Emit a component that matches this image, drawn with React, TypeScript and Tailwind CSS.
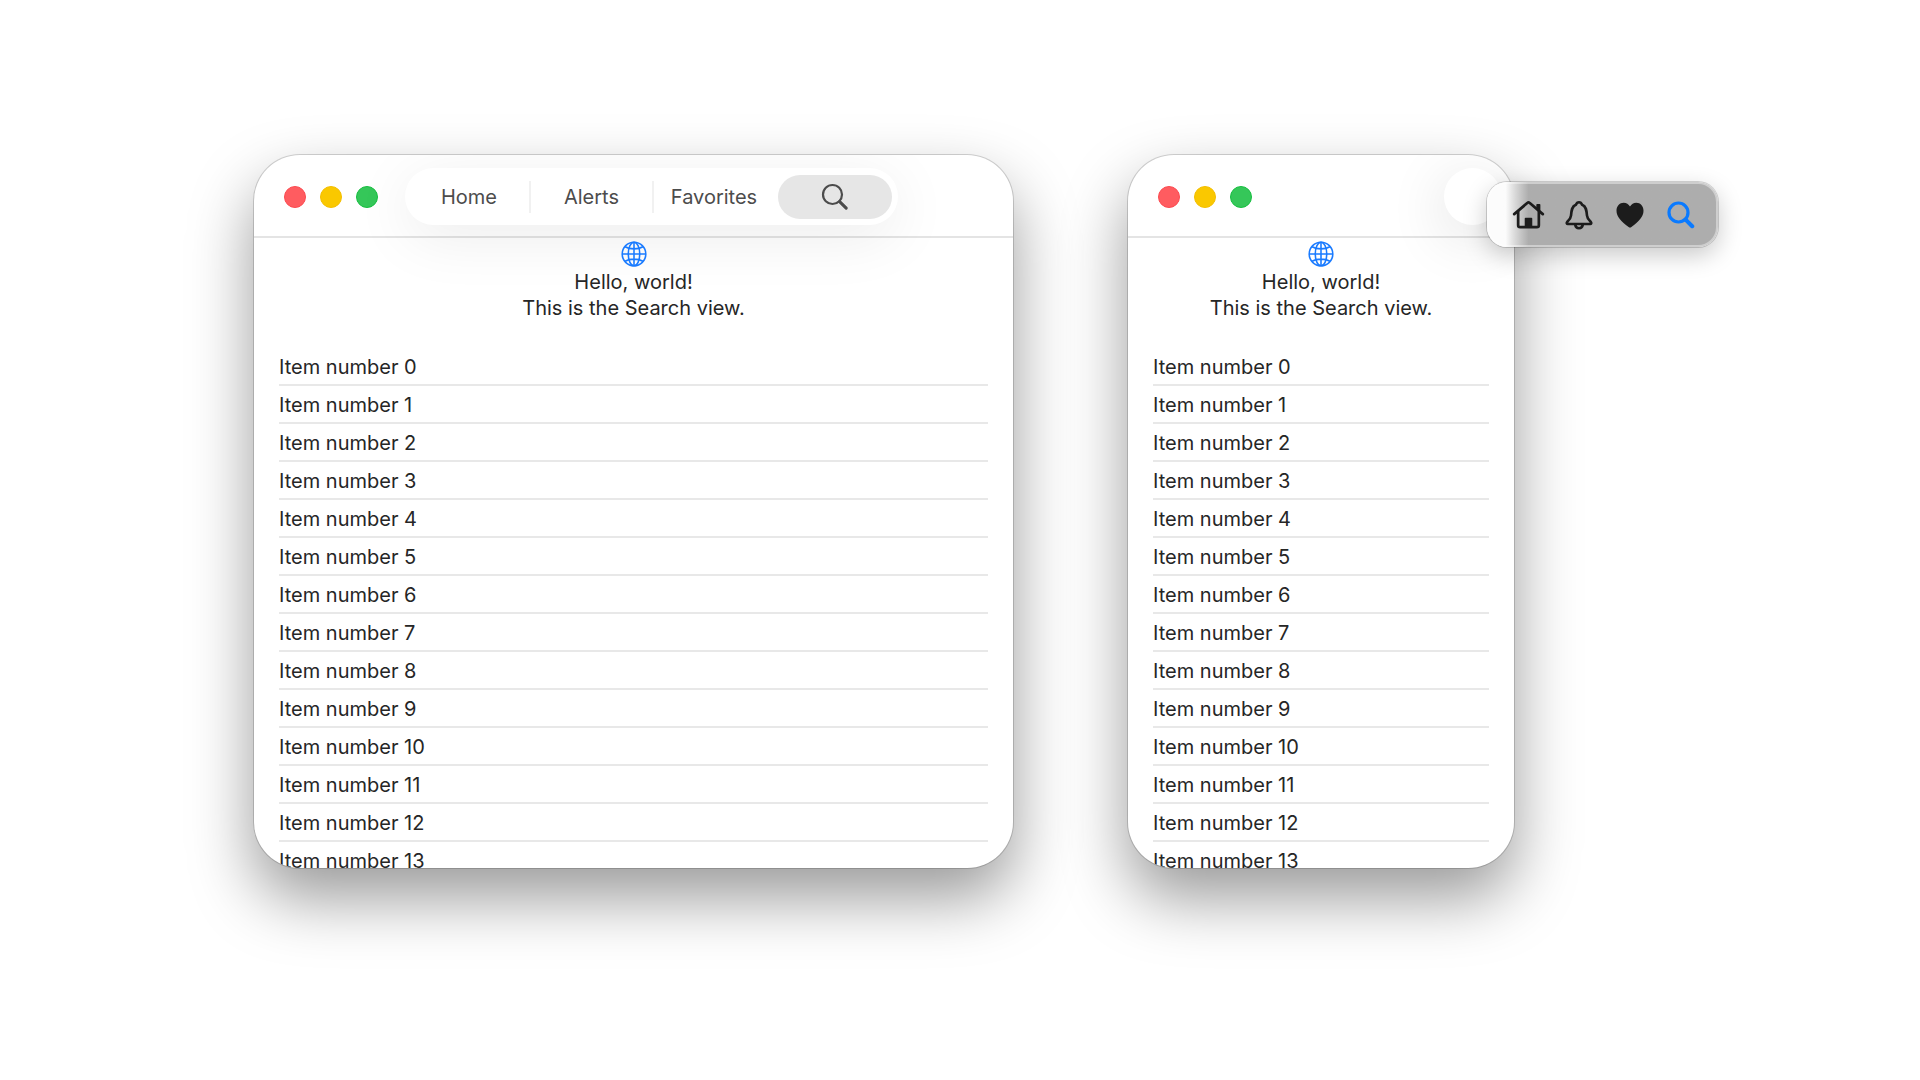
import React from "react";

type IconProps = { className?: string };

function GlobeIcon({ className }: IconProps) {
  return (
    <svg viewBox="0 0 28 28" className={className} fill="none" stroke="currentColor" strokeWidth="1.7" aria-hidden="true">
      <circle cx="14" cy="14" r="12.7" />
      <ellipse cx="14" cy="14" rx="6.2" ry="12.7" />
      <path d="M14 1.3v25.4M1.3 14h25.4M4.4 6.2c2.6 1.6 5.9 2.3 9.6 2.3s7-.7 9.6-2.3M4.4 21.8c2.6-1.6 5.9-2.3 9.6-2.3s7 .7 9.6 2.3" />
    </svg>
  );
}

function SearchIcon({ className, strokeWidth = 2.2 }: IconProps & { strokeWidth?: number }) {
  return (
    <svg viewBox="0 0 28 28" className={className} fill="none" stroke="currentColor" strokeWidth={strokeWidth} strokeLinecap="round" aria-hidden="true">
      <circle cx="11.5" cy="11.5" r="9.5" />
      <path d="M18.6 18.6 25.2 25.2" strokeWidth={strokeWidth + 0.9} />
    </svg>
  );
}

function HomeIcon({ className }: IconProps) {
  return (
    <svg viewBox="0 0 34 30" className={className} fill="none" stroke="currentColor" strokeWidth="2.8" strokeLinecap="round" strokeLinejoin="round" aria-hidden="true">
      <path d="M2.2 14.6 16 2.9a1.5 1.5 0 0 1 2 0L31.8 14.6" />
      <path d="M6.3 12v14a2 2 0 0 0 2 2h17.400a2 2 0 0 0 2-2V12" />
      <path d="M26 8.5V5h2.4v5.9" fill="currentColor" strokeWidth="1.8" />
      <path d="M14 27v-7.8h6V27z" fill="currentColor" strokeWidth="1.8" />
    </svg>
  );
}

function BellIcon({ className }: IconProps) {
  return (
    <svg viewBox="0 0 28 30" className={className} fill="none" stroke="currentColor" strokeWidth="2.6" strokeLinejoin="round" strokeLinecap="round" aria-hidden="true">
      <path d="M2.8 24c-1 0-1.4-1-.8-1.8 1.2-1.6 3.7-3.3 4-6.5.4-5.4.9-9.4 4.9-10.900C11.5 3.1 12.5 2.2 14 2.2s2.5.9 3.1 2.6c4 1.5 4.500 5.500 4.900 10.900.3 3.200 2.800 4.900 4 6.500.6.8.2 1.800-.8 1.800z" />
      <path d="M10.200 24.500c.3 2.300 1.800 3.700 3.800 3.700s3.500-1.400 3.800-3.700" />
    </svg>
  );
}

function HeartIcon({ className }: IconProps) {
  return (
    <svg viewBox="0 0 28 26" className={className} fill="currentColor" aria-hidden="true">
      <path d="M14 25.5c-.5 0-1-.3-1.4-.6C5.2 20 .5 14.5.5 8.8.5 4 3.6.7 7.7.7c2.7 0 4.900 1.400 6.300 3.700C15.400 2.100 17.600.7 20.300.7c4.100 0 7.200 3.300 7.200 8.100 0 5.700-4.700 11.200-12.100 16.100-.4.3-.9.6-1.400.6z" />
    </svg>
  );
}

function WindowControls() {
  return (
    <div className="flex shrink-0 gap-[14px]">
      <button type="button" aria-label="Close" className="size-[22px] rounded-full border border-[#fb4a50] bg-[#ff5c60]" />
      <button type="button" aria-label="Minimize" className="size-[22px] rounded-full border border-[#f3be00] bg-[#fac800]" />
      <button type="button" aria-label="Zoom" className="size-[22px] rounded-full border border-[#17be40] bg-[#35c759]" />
    </div>
  );
}

const items = Array.from({ length: 14 }, (_, i) => `Item number ${i}`);

function Content() {
  return (
    <>
      <div className="flex shrink-0 flex-col items-center pt-[3px] text-[20px] leading-[26px]">
        <GlobeIcon className="mb-[2px] size-[26px] text-[#1a7bff]" />
        <p>Hello, world!</p>
        <p>This is the Search view.</p>
      </div>
      <ul className="mx-[25px] mt-[27px] min-h-0 flex-1 basis-0 overflow-hidden text-[20px]">
        {items.map((item) => (
          <li key={item} className="flex h-[38px] items-center border-b-2 border-[#e8e8e8] pt-[2px] whitespace-nowrap">
            {item}
          </li>
        ))}
      </ul>
    </>
  );
}

function Frame({ className, toolbar, children }: { className: string; toolbar: React.ReactNode; children?: React.ReactNode }) {
  return (
    <section className={className}>
      <div className="flex h-full flex-col overflow-hidden rounded-[46px] bg-white shadow-[0_0_0_1px_rgba(0,0,0,0.16),0_30px_64px_rgba(0,0,0,0.4)]">
        <header className="flex h-[83px] shrink-0 items-center border-b-2 border-[#e4e4e4] pt-[2px] pl-[30px]">
          <WindowControls />
          {toolbar}
        </header>
        <Content />
      </div>
      {children}
    </section>
  );
}

function Tabs() {
  return (
    <nav aria-label="Views" className="ml-[27px] flex h-[57px] items-center rounded-full bg-white pr-[6px] pl-[4px] text-[20px] text-[#4c4c4c] shadow-[0_12px_60px_rgba(0,0,0,0.08)]">
      <button type="button" className="h-8 w-[122px] border-r-2 border-[#f1f1f1] text-center">Home</button>
      <button type="button" className="h-8 w-[123px] border-r-2 border-[#f1f1f1] text-center">Alerts</button>
      <button type="button" className="h-8 w-[124px] pr-1 text-center">Favorites</button>
      <button type="button" aria-label="Search" aria-current="page" className="flex h-11 w-[114px] items-center justify-center rounded-full bg-[#e6e6e6]">
        <SearchIcon className="size-[28px]" />
      </button>
    </nav>
  );
}

function OverflowMenu() {
  const cell = "flex h-full w-[51px] items-center justify-center";
  return (
    <nav aria-label="More views" className="absolute top-[27px] -right-[204px] flex h-[65px] w-[231px] items-center justify-center rounded-[20px] border-2 border-white/40 bg-linear-to-r from-[#fcfcfc] from-8% via-[#dadada] via-12% to-[#adadad] to-18% bg-origin-border pl-[4px] text-[#1c1c1c] shadow-[0_0_0_1px_rgba(0,0,0,0.16),0_8px_24px_rgba(0,0,0,0.22)]">
      <button type="button" aria-label="Home" className={cell}><HomeIcon className="h-[29px] w-[33px]" /></button>
      <button type="button" aria-label="Alerts" className={cell}><BellIcon className="h-[30px] w-[28px]" /></button>
      <button type="button" aria-label="Favorites" className={cell}><HeartIcon className="h-[26px] w-[28px]" /></button>
      <button type="button" aria-label="Search" aria-current="page" className={cell}><SearchIcon strokeWidth={3.2} className="size-[28px] text-[#0a7aff]" /></button>
    </nav>
  );
}

export default function App() {
  return (
    <main className="flex h-screen gap-[115px] overflow-hidden bg-white pt-[155px] pr-[406px] pb-[212px] pl-[254px] font-['Inter',sans-serif] text-[#262626]">
      <Frame className="min-w-0 flex-[759]" toolbar={<Tabs />} />
      <Frame
        className="relative min-w-0 flex-[386]"
        toolbar={
          <button type="button" aria-label="Show more" className="mr-[13px] ml-auto size-[57px] rounded-full bg-white shadow-[0_12px_60px_rgba(0,0,0,0.14)]" />
        }
      >
        <OverflowMenu />
      </Frame>
    </main>
  );
}
